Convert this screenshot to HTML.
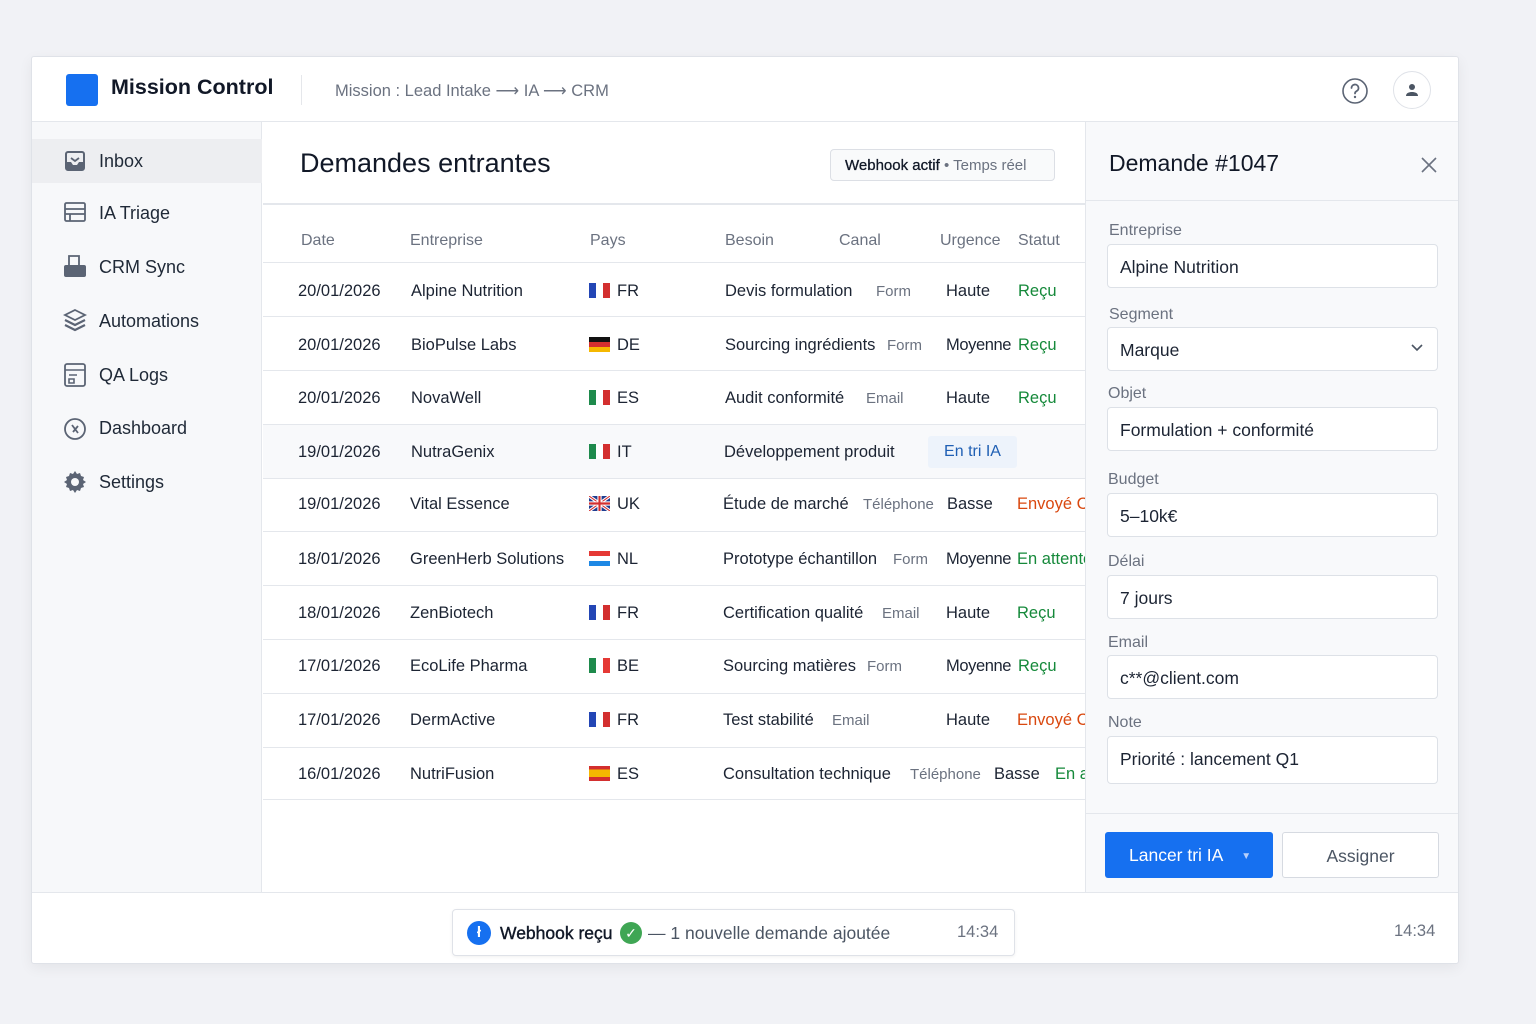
<!DOCTYPE html>
<html><head><meta charset="utf-8"><style>
*{margin:0;padding:0;box-sizing:border-box}
body{width:1536px;height:1024px;background:#f1f2f6;font-family:"Liberation Sans",sans-serif;color:#1c2433;position:relative;overflow:hidden}
.a{position:absolute;white-space:nowrap}
.win{position:absolute;left:31px;top:56px;width:1428px;height:908px;background:#fff;border:1px solid #dfe2e8;border-radius:3px;box-shadow:0 4px 14px rgba(0,0,0,.06);overflow:hidden}
.hl{position:absolute;left:0;right:0;height:1px;background:#e4e7ec}
.nav{font-size:18px;color:#1f2937}
.th{font-size:16px;color:#6b7280}
.td{font-size:16.5px;color:#1c2433}
.cn{font-size:15px;color:#6b7280}
.g{color:#15893a}.o{color:#d9480f}
.lab{font-size:16px;color:#6b7280}
.inp{position:absolute;left:1075px;width:331px;height:44px;background:#fff;border:1px solid #dde1e7;border-radius:4px;font-size:17.5px;color:#1c2433;padding:12px 12px;white-space:nowrap}
.flag{position:absolute;width:21px;height:15px}
</style></head><body>
<div class="win">
<div class="a" style="left:34px;top:17px;width:32px;height:32px;background:#1670f0;border-radius:3px"></div>
<div class="a" style="left:79px;top:18px;font-size:21.5px;font-weight:bold;color:#111827">Mission Control</div>
<div class="a" style="left:269px;top:18px;width:1px;height:30px;background:#e5e7eb"></div>
<div class="a" style="left:303px;top:24px;font-size:16.5px;color:#6b7280">Mission : Lead Intake ⟶ IA ⟶ CRM</div>
<svg class="a" style="left:1309px;top:20px" width="28" height="28" viewBox="0 0 28 28"><circle cx="14" cy="14" r="12" fill="none" stroke="#5b6474" stroke-width="1.6"/><path d="M10.5 11a3.5 3.5 0 1 1 5 3.2c-1 .5-1.5 1.2-1.5 2.3" fill="none" stroke="#5b6474" stroke-width="1.8" stroke-linecap="round"/><circle cx="14" cy="20" r="1.2" fill="#5b6474"/></svg>
<div class="a" style="left:1361px;top:14px;width:38px;height:38px;border:1px solid #dfe2e8;border-radius:50%"></div>
<svg class="a" style="left:1370px;top:23px" width="20" height="20" viewBox="0 0 20 20"><circle cx="10" cy="7" r="3" fill="#4b5563"/><path d="M4 16c0-3 3-4 6-4s6 1 6 4z" fill="#4b5563"/></svg>
<div class="hl" style="top:64px"></div>
<div class="a" style="left:0;top:65px;width:230px;height:771px;background:#f7f8fa;border-right:1px solid #e4e7ec"></div>
<div class="a" style="left:0;top:82px;width:230px;height:44px;background:#edeef1"></div>
<svg class="a" style="left:32px;top:93px" width="22" height="22" viewBox="0 0 22 22"><rect x="2" y="2" width="18" height="18" rx="2" fill="none" stroke="#5b6474" stroke-width="2"/><path d="M2 12h5l2 3h4l2-3h5v8H2z" fill="#5b6474"/><path d="M7 8l4 3 4-3" fill="none" stroke="#5b6474" stroke-width="1.8"/></svg>
<div class="a nav" style="left:67px;top:94px">Inbox</div>
<svg class="a" style="left:32px;top:145px" width="22" height="20" viewBox="0 0 22 20"><rect x="1" y="1" width="20" height="18" rx="1.5" fill="none" stroke="#5b6474" stroke-width="1.8"/><path d="M1 7h20M1 12h20M6 12v7" stroke="#5b6474" stroke-width="1.8"/></svg>
<div class="a nav" style="left:67px;top:146px">IA Triage</div>
<svg class="a" style="left:31px;top:197px" width="24" height="24" viewBox="0 0 24 24"><path d="M6 2h10v10H6z" fill="none" stroke="#5b6474" stroke-width="1.8"/><rect x="1" y="11" width="22" height="12" rx="2" fill="#5b6474"/></svg>
<div class="a nav" style="left:67px;top:200px">CRM Sync</div>
<svg class="a" style="left:31px;top:251px" width="24" height="26" viewBox="0 0 24 26"><path d="M12 2l10 5-10 5L2 7z" fill="none" stroke="#5b6474" stroke-width="1.8"/><path d="M2 12l10 5 10-5M2 17l10 5 10-5" fill="none" stroke="#5b6474" stroke-width="2.2"/></svg>
<div class="a nav" style="left:67px;top:254px">Automations</div>
<svg class="a" style="left:32px;top:306px" width="22" height="24" viewBox="0 0 22 24"><rect x="1" y="1" width="20" height="22" rx="2" fill="none" stroke="#5b6474" stroke-width="1.8"/><path d="M1 7h20M5 12h8M5 16h5v4H5z" fill="none" stroke="#5b6474" stroke-width="1.6"/></svg>
<div class="a nav" style="left:67px;top:308px">QA Logs</div>
<svg class="a" style="left:31px;top:360px" width="24" height="24" viewBox="0 0 24 24"><circle cx="12" cy="12" r="10" fill="none" stroke="#5b6474" stroke-width="1.8"/><path d="M9 8l6 8M15 9l-5 6" stroke="#5b6474" stroke-width="1.8"/></svg>
<div class="a nav" style="left:67px;top:361px">Dashboard</div>
<svg class="a" style="left:31px;top:413px" width="24" height="24" viewBox="0 0 24 24"><path d="M12 1l2 3 3-1 1 3 3 1-1 3 3 2-3 2 1 3-3 1-1 3-3-1-2 3-2-3-3 1-1-3-3-1 1-3-3-2 3-2-1-3 3-1 1-3 3 1z" fill="#5b6474"/><circle cx="12" cy="12" r="4" fill="#f7f8fa"/></svg>
<div class="a nav" style="left:67px;top:415px">Settings</div>
<div class="a" style="left:268px;top:91px;font-size:27px;color:#111827">Demandes entrantes</div>
<div class="a" style="left:798px;top:92px;width:225px;height:32px;border:1px solid #dcdfe5;border-radius:4px;background:#f9fafb;font-size:15px;padding:7px 14px"><b style="font-weight:normal;color:#111827;-webkit-text-stroke:.3px #111827">Webhook actif</b> <span style="color:#6b7280">• Temps réel</span></div>
<div class="a" style="left:231px;top:146px;width:822px;height:2px;background:#e4e7ec"></div>
<div class="a" style="left:231px;top:148px;width:822px;height:688px;overflow:hidden">
<div class="a th" style="left:38px;top:27px">Date</div>
<div class="a th" style="left:147px;top:27px">Entreprise</div>
<div class="a th" style="left:327px;top:27px">Pays</div>
<div class="a th" style="left:462px;top:27px">Besoin</div>
<div class="a th" style="left:576px;top:27px">Canal</div>
<div class="a th" style="left:677px;top:27px">Urgence</div>
<div class="a th" style="left:755px;top:27px">Statut</div>
<div class="hl" style="top:57px"></div>
<div class="a" style="left:0;top:220px;width:822px;height:53px;background:#f8f9fb"></div>
<div class="hl" style="top:111px"></div><div class="hl" style="top:165px"></div><div class="hl" style="top:219px"></div><div class="hl" style="top:273px"></div><div class="hl" style="top:326px"></div><div class="hl" style="top:380px"></div><div class="hl" style="top:434px"></div><div class="hl" style="top:488px"></div><div class="hl" style="top:542px"></div><div class="hl" style="top:594px"></div>
<div class="a td" style="left:35px;top:77px">20/01/2026</div><div class="a td" style="left:148px;top:77px">Alpine Nutrition</div>
<div class="flag" style="left:326px;top:78px;background:linear-gradient(90deg,#2346b5 0 33%,#fff 33% 67%,#d32f2f 67%)"></div><div class="a td" style="left:354px;top:77px">FR</div>
<div class="a td" style="left:462px;top:77px">Devis formulation</div><div class="a cn" style="left:613px;top:78px">Form</div><div class="a td" style="left:683px;top:77px">Haute</div><div class="a td g" style="left:755px;top:77px">Reçu</div>

<div class="a td" style="left:35px;top:131px">20/01/2026</div><div class="a td" style="left:148px;top:131px">BioPulse Labs</div>
<div class="flag" style="left:326px;top:132px;background:linear-gradient(#111 0 33%,#d32f2f 33% 67%,#f5b800 67%)"></div><div class="a td" style="left:354px;top:131px">DE</div>
<div class="a td" style="left:462px;top:131px">Sourcing ingrédients</div><div class="a cn" style="left:624px;top:132px">Form</div><div class="a td" style="left:683px;top:131px;letter-spacing:-.4px">Moyenne</div><div class="a td g" style="left:755px;top:131px">Reçu</div>

<div class="a td" style="left:35px;top:184px">20/01/2026</div><div class="a td" style="left:148px;top:184px">NovaWell</div>
<div class="flag" style="left:326px;top:185px;background:linear-gradient(90deg,#1e8a4c 0 33%,#fff 33% 67%,#d32f2f 67%)"></div><div class="a td" style="left:354px;top:184px">ES</div>
<div class="a td" style="left:462px;top:184px">Audit conformité</div><div class="a cn" style="left:603px;top:185px">Email</div><div class="a td" style="left:683px;top:184px">Haute</div><div class="a td g" style="left:755px;top:184px">Reçu</div>

<div class="a td" style="left:35px;top:238px">19/01/2026</div><div class="a td" style="left:148px;top:238px">NutraGenix</div>
<div class="flag" style="left:326px;top:239px;background:linear-gradient(90deg,#1e8a4c 0 33%,#fff 33% 67%,#d32f2f 67%)"></div><div class="a td" style="left:354px;top:238px">IT</div>
<div class="a td" style="left:461px;top:238px">Développement produit</div>
<div class="a" style="left:665px;top:231px;width:89px;height:32px;background:#edf3fb;border-radius:3px;font-size:16px;color:#1f5fb4;padding:7px 0;text-align:center">En tri IA</div>

<div class="a td" style="left:35px;top:290px">19/01/2026</div><div class="a td" style="left:147px;top:290px">Vital Essence</div>
<svg class="flag" style="left:326px;top:291px" viewBox="0 0 20 14" preserveAspectRatio="none"><rect width="20" height="14" fill="#1f3c8f"/><path d="M0 0L20 14M20 0L0 14" stroke="#fff" stroke-width="3"/><path d="M0 0L20 14M20 0L0 14" stroke="#d32f2f" stroke-width="1"/><path d="M10 0v14M0 7h20" stroke="#fff" stroke-width="4"/><path d="M10 0v14M0 7h20" stroke="#d32f2f" stroke-width="2"/></svg><div class="a td" style="left:354px;top:290px">UK</div>
<div class="a td" style="left:460px;top:290px">Étude de marché</div><div class="a cn" style="left:600px;top:291px">Téléphone</div><div class="a td" style="left:684px;top:290px">Basse</div><div class="a td o" style="left:754px;top:290px">Envoyé CRM</div>

<div class="a td" style="left:35px;top:345px">18/01/2026</div><div class="a td" style="left:147px;top:345px">GreenHerb Solutions</div>
<div class="flag" style="left:326px;top:346px;background:linear-gradient(#e53935 0 33%,#fff 33% 67%,#1e88e5 67%)"></div><div class="a td" style="left:354px;top:345px">NL</div>
<div class="a td" style="left:460px;top:345px">Prototype échantillon</div><div class="a cn" style="left:630px;top:346px">Form</div><div class="a td" style="left:683px;top:345px;letter-spacing:-.4px">Moyenne</div><div class="a td g" style="left:754px;top:345px">En attente</div>

<div class="a td" style="left:35px;top:399px">18/01/2026</div><div class="a td" style="left:147px;top:399px">ZenBiotech</div>
<div class="flag" style="left:326px;top:400px;background:linear-gradient(90deg,#2346b5 0 33%,#fff 33% 67%,#d32f2f 67%)"></div><div class="a td" style="left:354px;top:399px">FR</div>
<div class="a td" style="left:460px;top:399px">Certification qualité</div><div class="a cn" style="left:619px;top:400px">Email</div><div class="a td" style="left:683px;top:399px">Haute</div><div class="a td g" style="left:754px;top:399px">Reçu</div>

<div class="a td" style="left:35px;top:452px">17/01/2026</div><div class="a td" style="left:147px;top:452px">EcoLife Pharma</div>
<div class="flag" style="left:326px;top:453px;background:linear-gradient(90deg,#1e8a4c 0 33%,#fff 33% 67%,#e53935 67%)"></div><div class="a td" style="left:354px;top:452px">BE</div>
<div class="a td" style="left:460px;top:452px">Sourcing matières</div><div class="a cn" style="left:604px;top:453px">Form</div><div class="a td" style="left:683px;top:452px;letter-spacing:-.4px">Moyenne</div><div class="a td g" style="left:755px;top:452px">Reçu</div>

<div class="a td" style="left:35px;top:506px">17/01/2026</div><div class="a td" style="left:147px;top:506px">DermActive</div>
<div class="flag" style="left:326px;top:507px;background:linear-gradient(90deg,#2346b5 0 33%,#fff 33% 67%,#d32f2f 67%)"></div><div class="a td" style="left:354px;top:506px">FR</div>
<div class="a td" style="left:460px;top:506px">Test stabilité</div><div class="a cn" style="left:569px;top:507px">Email</div><div class="a td" style="left:683px;top:506px">Haute</div><div class="a td o" style="left:754px;top:506px">Envoyé CRM</div>

<div class="a td" style="left:35px;top:560px">16/01/2026</div><div class="a td" style="left:147px;top:560px">NutriFusion</div>
<div class="flag" style="left:326px;top:561px;background:linear-gradient(#d32f2f 0 25%,#f5b800 25% 75%,#d32f2f 75%)"></div><div class="a td" style="left:354px;top:560px">ES</div>
<div class="a td" style="left:460px;top:560px">Consultation technique</div><div class="a cn" style="left:647px;top:561px">Téléphone</div><div class="a td" style="left:731px;top:560px">Basse</div><div class="a td g" style="left:792px;top:560px">En attente</div>
</div>
<div class="a" style="left:1053px;top:65px;width:375px;height:771px;background:#f8f9fb;border-left:1px solid #e4e7ec"></div>
<div class="a" style="left:1077px;top:93px;font-size:23px;color:#111827">Demande #1047</div>
<svg class="a" style="left:1388px;top:99px" width="18" height="18" viewBox="0 0 18 18"><path d="M2 2l14 14M16 2L2 16" stroke="#6b7280" stroke-width="1.6"/></svg>
<div class="a" style="left:1054px;top:143px;width:374px;height:1px;background:#e4e7ec"></div>
<div class="a lab" style="left:1077px;top:165px">Entreprise</div>
<div class="inp" style="top:187px">Alpine Nutrition</div>
<div class="a lab" style="left:1077px;top:249px">Segment</div>
<div class="inp" style="top:270px">Marque</div>
<svg class="a" style="left:1378px;top:286px" width="14" height="10" viewBox="0 0 14 10"><path d="M2 2l5 5 5-5" fill="none" stroke="#4b5563" stroke-width="1.6"/></svg>
<div class="a lab" style="left:1076px;top:328px">Objet</div>
<div class="inp" style="top:350px">Formulation + conformité</div>
<div class="a lab" style="left:1076px;top:414px">Budget</div>
<div class="inp" style="top:436px">5–10k€</div>
<div class="a lab" style="left:1076px;top:496px">Délai</div>
<div class="inp" style="top:518px">7 jours</div>
<div class="a lab" style="left:1076px;top:577px">Email</div>
<div class="inp" style="top:598px">c**@client.com</div>
<div class="a lab" style="left:1076px;top:657px">Note</div>
<div class="inp" style="top:679px;height:48px">Priorité : lancement Q1</div>
<div class="a" style="left:1054px;top:756px;width:374px;height:1px;background:#e4e7ec"></div>
<div class="a" style="left:1073px;top:775px;width:168px;height:46px;background:#1670f0;border-radius:3px;color:#fff;font-size:17.5px;padding:13px 0 0 24px">Lancer tri IA <span style="font-size:10px;color:#b8d0fb;margin-left:14px;vertical-align:2px">▼</span></div>
<div class="a" style="left:1250px;top:775px;width:157px;height:46px;background:#fff;border:1px solid #d6dae1;border-radius:3px;color:#4b5563;font-size:17.5px;text-align:center;padding-top:13px">Assigner</div>
<div class="hl" style="top:835px"></div>
<div class="a" style="left:420px;top:852px;width:563px;height:47px;background:#fff;border:1px solid #dfe2e8;border-radius:4px;box-shadow:0 1px 3px rgba(0,0,0,.06)"></div>
<div class="a" style="left:435px;top:864px;width:24px;height:24px;border-radius:50%;background:#1670f0;color:#fff;font-size:15px;font-weight:bold;text-align:center;line-height:24px">ł</div>
<div class="a" style="left:468px;top:866px;font-size:17.5px;color:#111827;-webkit-text-stroke:.4px #111827">Webhook reçu</div>
<div class="a" style="left:588px;top:865px;width:22px;height:22px;border-radius:50%;background:#3fa654;color:#fff;font-size:14px;text-align:center;line-height:22px">✓</div>
<div class="a" style="left:616px;top:866px;font-size:17.5px;color:#4b5563">— 1 nouvelle demande ajoutée</div>
<div class="a" style="left:925px;top:866px;font-size:16.5px;color:#6b7280">14:34</div>
<div class="a" style="left:1362px;top:865px;font-size:16.5px;color:#6b7280">14:34</div>
</div>
</body></html>
